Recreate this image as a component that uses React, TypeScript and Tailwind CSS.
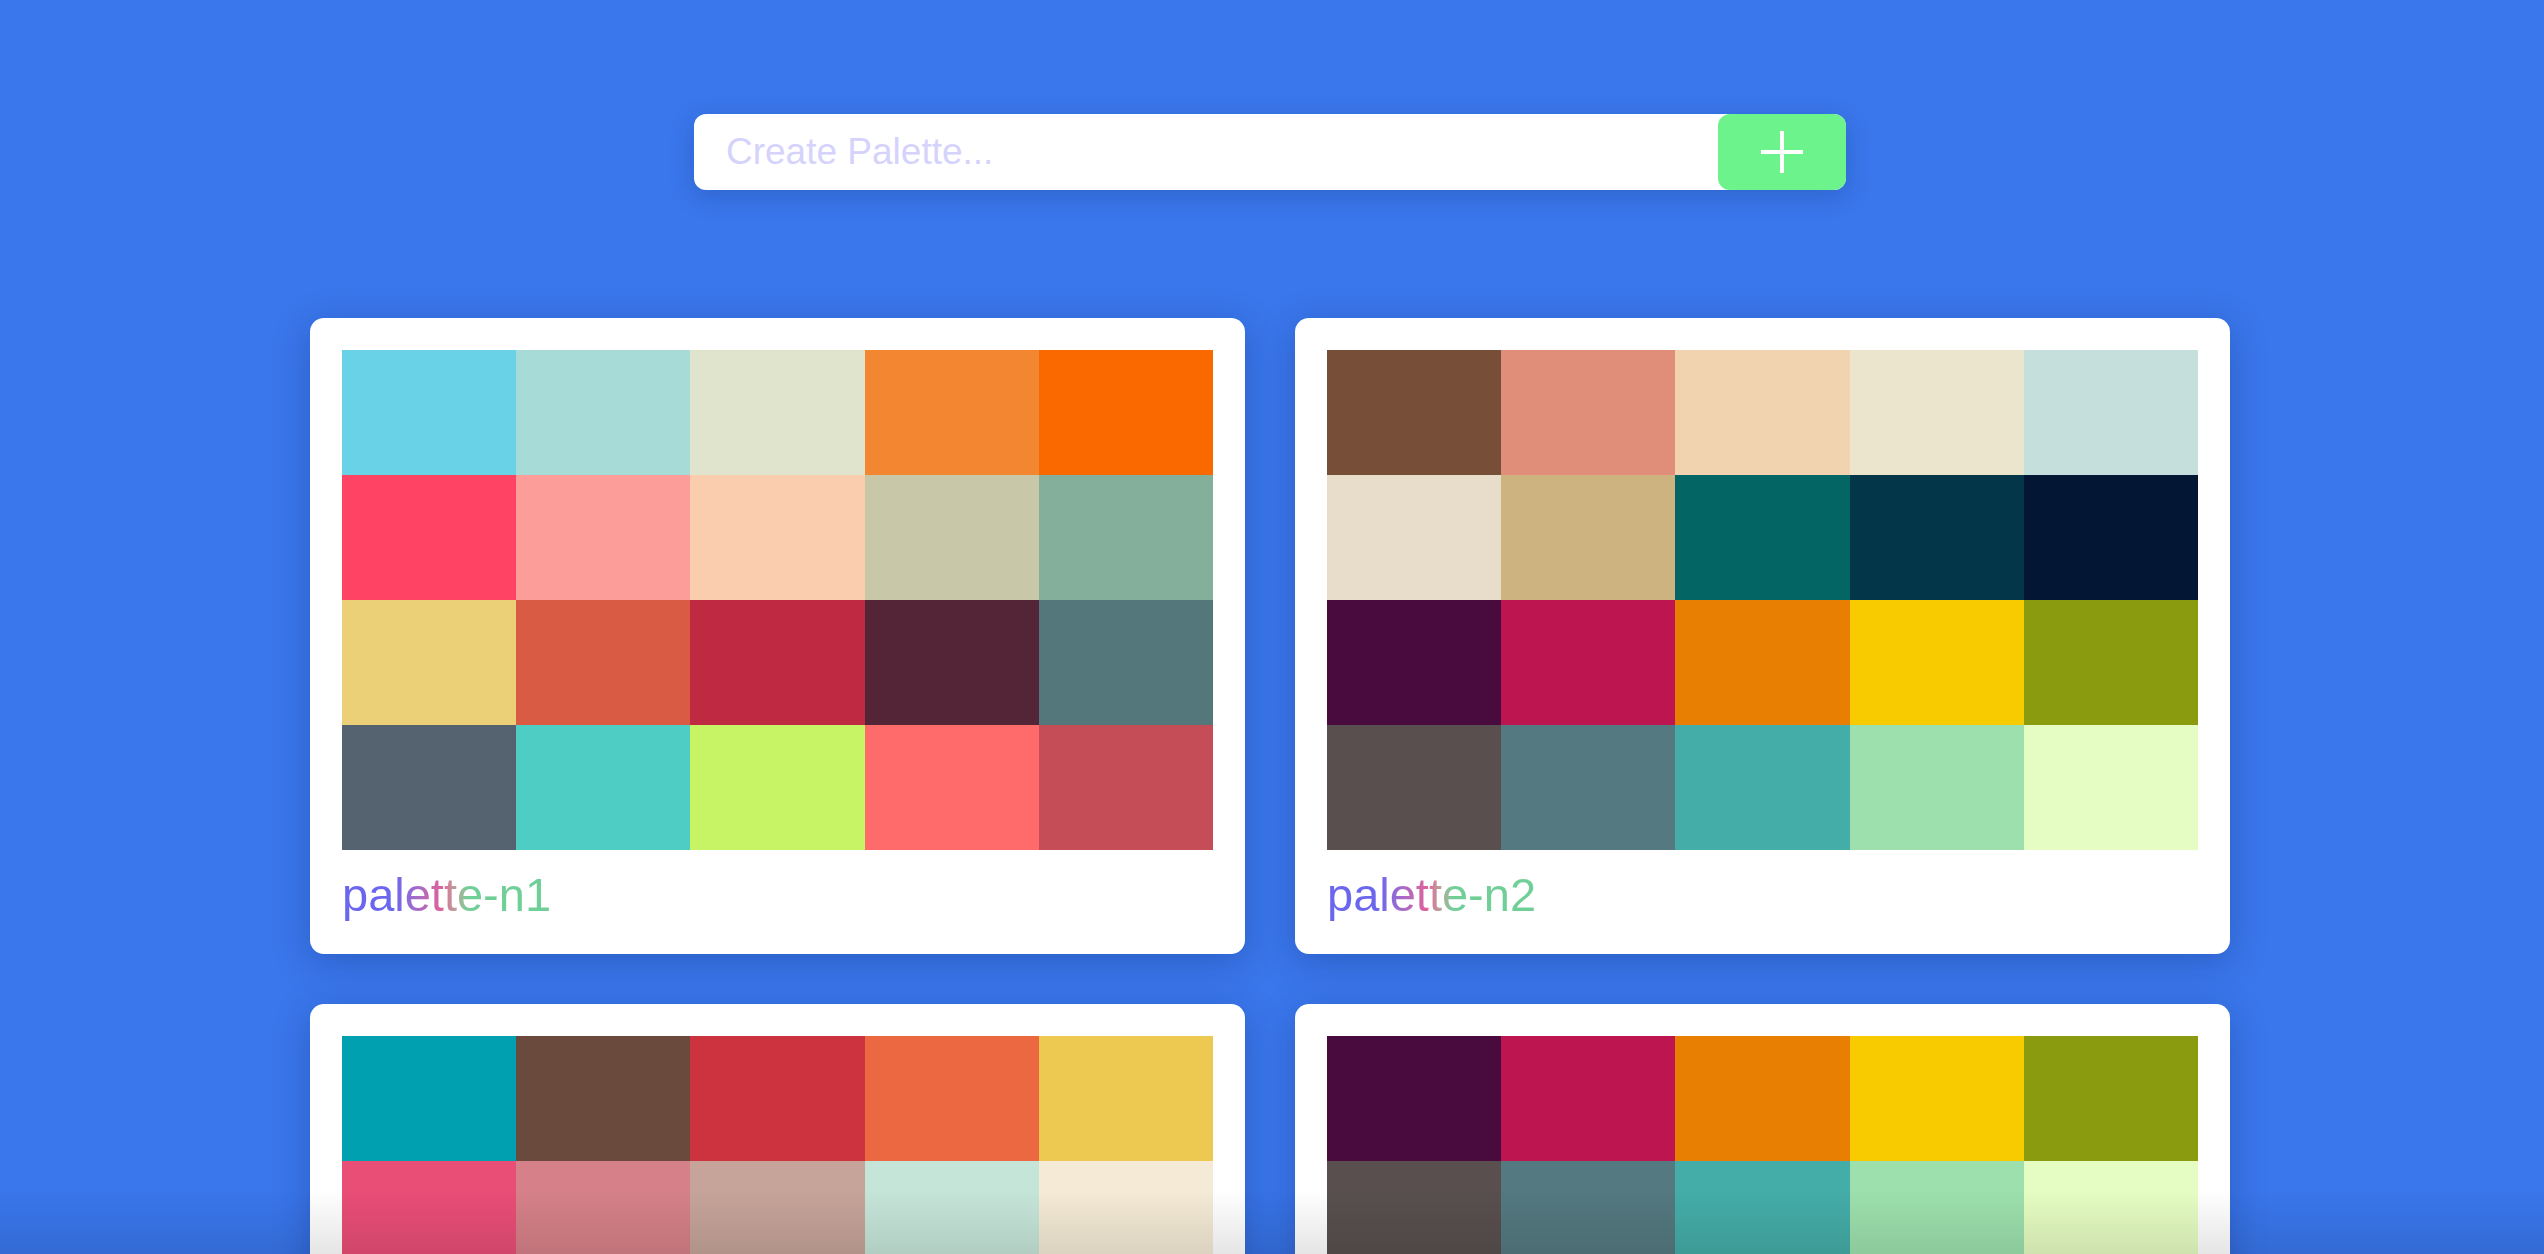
import { useState } from "react";

// rows of five colours, four rows per card
const PALETTES: string[][] = [
    ["#69d2e7", "#a7dbd8", "#e0e4cc", "#f38630", "#fa6900"],
    ["#fe4365", "#fc9d9a", "#f9cdad", "#c8c8a9", "#83af9b"],
    ["#ecd078", "#d95b43", "#c02942", "#542437", "#53777a"],
    ["#556270", "#4ecdc4", "#c7f464", "#ff6b6b", "#c44d58"],
    ["#774f38", "#e08e79", "#f1d4af", "#ece5ce", "#c5e0dc"],
    ["#e8ddcb", "#cdb380", "#036564", "#033649", "#031634"],
    ["#490a3d", "#bd1550", "#e97f02", "#f8ca00", "#8a9b0f"],
    ["#594f4f", "#547980", "#45ada8", "#9de0ad", "#e5fcc2"],
    ["#00a0b0", "#6a4a3c", "#cc333f", "#eb6841", "#edc951"],
    ["#e94e77", "#d68189", "#c6a49a", "#c6e5d9", "#f4ead5"],
    ["#d1e751", "#ffffff", "#000000", "#4dbce9", "#26ade4"],
    ["#ff9900", "#424242", "#e9e9e9", "#bcbcbc", "#3299bb"],
];

const cards = [
    { name: "palette-n1", rows: [0, 1, 2, 3] },
    { name: "palette-n2", rows: [4, 5, 6, 7] },
    { name: "palette-n3", rows: [8, 9, 10, 11] },
    { name: "palette-n4", rows: [6, 7, 8, 9] },
];

const PaletteCard = ({ name, rows }: { name: string; rows: number[] }) => (
    <div className="bg-white rounded-[14px] p-8 shadow-[0_8px_36px_rgba(10,30,90,0.28)]">
        <div className="grid grid-cols-5">
            {rows.flatMap((r) =>
                PALETTES[r].map((c, i) => (
                    <div key={`${r}-${i}`} className="h-[125px]" style={{ backgroundColor: c }} />
                ))
            )}
        </div>
        <div className="pt-[18px]">
            <span className="block w-fit text-[47px] leading-[54px] bg-linear-to-r from-[#6b66ee] from-25% via-[#e0609a] via-48% to-[#6fcf97] to-60% bg-clip-text text-transparent">
                {name}
            </span>
        </div>
    </div>
);

export default function App() {
    const [value, setValue] = useState("");

    return (
        <div className="min-h-screen bg-[#3a77ec] font-['Liberation_Sans',Arial,sans-serif] pr-[4px]">
            <div className="flex flex-col items-center pt-[114px] pb-20">
                {/* Create palette input */}
                <div className="flex w-[1152px] h-[76px] bg-white rounded-[12px] shadow-[0_6px_24px_rgba(10,30,90,0.22)]">
                    <input
                        value={value}
                        onChange={(e) => setValue(e.target.value)}
                        placeholder="Create Palette..."
                        className="flex-1 bg-transparent pl-8 text-[37px] text-gray-700 outline-none placeholder:text-[#d5d3fb]"
                    />
                    <button className="w-[128px] h-full rounded-[12px] bg-[#6cf38c] flex items-center justify-center">
                        <svg width="44" height="44" viewBox="0 0 44 44">
                            <path d="M22 1v42M1 22h42" stroke="white" strokeWidth="4" fill="none" />
                        </svg>
                    </button>
                </div>

                {/* Palettes */}
                <div className="mt-[128px] grid grid-cols-[935px_935px] gap-[50px]">
                    {cards.map((c) => (
                        <PaletteCard key={c.name} name={c.name} rows={c.rows} />
                    ))}
                </div>
            </div>

            <div className="fixed bottom-0 inset-x-0 h-[64px] bg-linear-to-t from-black/10 to-transparent pointer-events-none" />
        </div>
    );
}
